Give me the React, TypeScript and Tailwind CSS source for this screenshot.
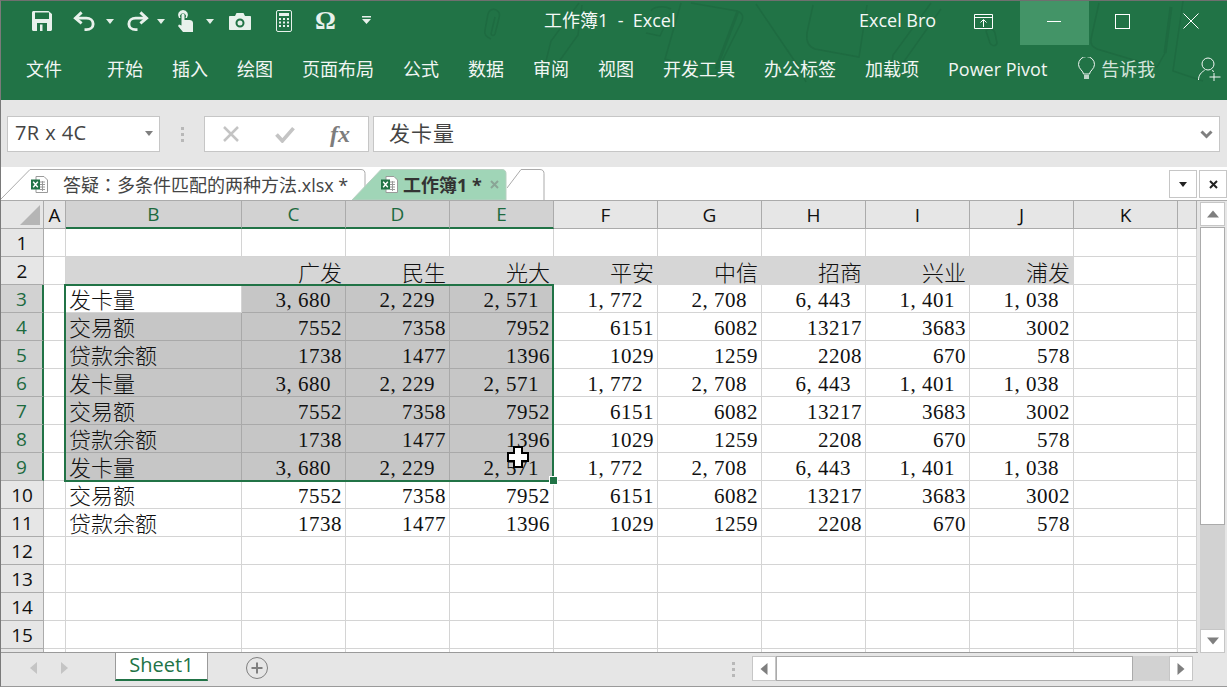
import React from "react";

const uiFont = "font-['Open_Sans','Noto_Sans_CJK_SC',sans-serif]";

const ribbonTabs = ["开始", "插入", "绘图", "页面布局", "公式", "数据", "审阅", "视图", "开发工具", "办公标签", "加载项", "Power Pivot"];
const columns = ["A", "B", "C", "D", "E", "F", "G", "H", "I", "J", "K", ""];
const heads = ["广发", "民生", "光大", "平安", "中信", "招商", "兴业", "浦发"];

const issued = ["3, 680", "2, 229", "2, 571", "1, 772", "2, 708", "6, 443", "1, 401", "1, 038"];
const amount = ["7552", "7358", "7952", "6151", "6082", "13217", "3683", "3002"];
const balance = ["1738", "1477", "1396", "1029", "1259", "2208", "670", "578"];

const blocks: Record<number, { label: string; values: string[] }> = {
  3: { label: "发卡量", values: issued },
  4: { label: "交易额", values: amount },
  5: { label: "贷款余额", values: balance },
  6: { label: "发卡量", values: issued },
  7: { label: "交易额", values: amount },
  8: { label: "贷款余额", values: balance },
  9: { label: "发卡量", values: issued },
  10: { label: "交易额", values: amount },
  11: { label: "贷款余额", values: balance },
};

const Caret = ({ className = "" }: { className?: string }) => (
  <svg width="8" height="5" viewBox="0 0 8 5" className={className}>
    <path d="M0 0h8L4 5z" fill="#e4efe8" />
  </svg>
);

function Qat() {
  return (
    <div className="flex items-center w-[380px] h-full pb-[4px]">
      {/* save */}
      <svg width="20" height="20" viewBox="0 0 20 20" className="ml-[31px]">
        <path fillRule="evenodd" d="M0 1.5C0 .7.7 0 1.5 0h15L20 3v15.5c0 .8-.7 1.5-1.5 1.5h-17C.7 20 0 19.300 0 18.500zM3 1.500v6.500h14V1.500zM5 12v8h10v-8zM8 13.500h2.500V20H8z" fill="#e8f1ec" />
      </svg>
      {/* undo */}
      <svg width="23" height="22" viewBox="0 0 24 22" className="ml-[21px]" fill="none" stroke="#e8f1ec" strokeWidth="3">
        <path d="M9 2 2.500 8 9 13.500" />
        <path d="M3 8h11c4 0 7 2.500 7 6s-3 6-7 6h-2" />
      </svg>
      <Caret className="ml-[10px]" />
      {/* redo */}
      <svg width="23" height="22" viewBox="0 0 24 22" className="ml-[12px]" fill="none" stroke="#e8f1ec" strokeWidth="3">
        <path d="M15 2l6.500 6L15 13.500" />
        <path d="M21 8H10c-4 0-7 2.500-7 6s3 6 7 6h2" />
      </svg>
      <Caret className="ml-[8px]" />
      {/* touch */}
      <svg width="16" height="22" viewBox="0 0 16 22" className="ml-[12px]">
        <path fillRule="evenodd" d="M6 0a5 5 0 0 1 4 8H8.500a3 3 0 1 0-5 0H2A5 5 0 0 1 6 0z" fill="#e8f1ec" />
        <path d="M4.500 5a1.500 1.500 0 0 1 3 0v5h5c2 0 3.500 1 3.500 3v9H6l-5-6 1-1.500 2.500 1z" fill="#e8f1ec" />
      </svg>
      <Caret className="ml-[13px]" />
      {/* camera */}
      <svg width="22" height="17" viewBox="0 0 22 17" className="ml-[15px]">
        <path fillRule="evenodd" d="M1 3h5l1.500-3h7L16 3h5c.6 0 1 .4 1 1v12c0 .6-.4 1-1 1H1c-.6 0-1-.4-1-1V4c0-.6.4-1 1-1zm10 2.500a4.500 4.500 0 1 0 0 9 4.500 4.500 0 0 0 0-9zm0 2a2.500 2.500 0 1 1 0 5 2.500 2.500 0 0 1 0-5z" fill="#e8f1ec" />
      </svg>
      {/* calculator */}
      <svg width="16" height="22" viewBox="0 0 16 22" className="ml-[25px]">
        <rect x=".5" y=".5" width="15" height="21" rx="1.500" fill="none" stroke="#e8f1ec" />
        <rect x="3" y="3" width="10" height="3" fill="#e8f1ec" />
        <path d="M3 8h2v2H3zM7 8h2v2H7zM11 8h2v2h-2zM3 11.500h2v2H3zM7 11.500h2v2H7zM11 11.500h2v2h-2zM3 15h2v2H3zM7 15h2v2H7zM11 15h2v2h-2z" fill="#e8f1ec" />
      </svg>
      <span className="ml-[23px] w-[21px] text-[26px] leading-none font-bold text-[#e8f1ec] font-['Liberation_Serif',serif]">Ω</span>
      <svg width="9" height="8" viewBox="0 0 9 8" className="ml-[26px] mb-[3px]">
        <path d="M0 0h9v1.500H0zM0 3h9L4.500 8z" fill="#e8f1ec" />
      </svg>
    </div>
  );
}

function WindowButtons() {
  return (
    <div className="flex h-full pb-[4px]">
      <div className="w-[69px] flex items-center justify-center">
        <svg width="14" height="1" viewBox="0 0 14 1"><path d="M0 .5h14" stroke="#fff" /></svg>
      </div>
      <div className="w-[69px] flex items-center justify-center">
        <svg width="15" height="15" viewBox="0 0 15 15"><rect x=".5" y=".5" width="14" height="14" fill="none" stroke="#fff" /></svg>
      </div>
      <div className="w-[68px] flex items-center justify-center">
        <svg width="16" height="16" viewBox="0 0 16 16"><path d="M.5.5l15 15M15.500.5l-15 15" stroke="#fff" /></svg>
      </div>
    </div>
  );
}

function Doodles() {
  return (
    <svg width="1226" height="99" viewBox="0 0 1226 99" className="absolute left-0 top-0" fill="none" stroke="#1e6b41" strokeWidth="1.500">
      <path d="M490 38c-5-2-7-5-6-9l3-16c1-4 5-6 8-4 4 2 4 5 3 8l-4 16c-1 2-3 2-4 0l4-17" />
      <path d="M578 2l-28 38-9 36 6 0 30-42 4-30" />
      <path d="M680 2l-16 56 50 16 26-52c3-6 2-10-4-12L690 2" />
      <path d="M715 68l22-58" strokeWidth="3" />
      <path d="M650 10c2-4 12-6 20-2M645 32l14 3 10-22" />
      <path d="M755 3l42 62 8 16" />
      <path d="M812 4l-6 28c-1 8 2 14 8 16l44 8 8-52" />
      <path d="M930 2l-38 52-2 14 12-6 38-54" />
      <path d="M985 30c3-4 8-2 9 2l2 10c-1 4-6 3-7 0z" />
      <path d="M1098 2l-8 36c-1 6 2 8 6 10l60 18 8-14" />
      <path d="M1170 6l-6 46" strokeWidth="3" />
      <path d="M1182 0l-10 70 30 10" />
    </svg>
  );
}

function ExcelFile() {
  return (
    <svg width="17" height="17" viewBox="0 0 17 17">
      <path d="M5 .5h8l3.500 3.500v12.500H5z" fill="#fff" stroke="#9a9a9a" />
      <path d="M9 6h5M9 8.500h5M9 11h5M9 13.500h5M11.500 5v10" stroke="#9a9a9a" />
      <rect x="0" y="3.500" width="9" height="10" fill="#217346" />
      <path d="M2.200 5.800l4.600 5.500M6.800 5.800l-4.600 5.500" stroke="#fff" strokeWidth="1.400" />
    </svg>
  );
}

function FileTabs() {
  return (
    <div className="flex h-[34px] bg-white border-b border-[#ababab] relative pt-[2px]">
      <div className="relative w-[365px] h-[31px] shrink-0">
        <svg width="365" height="31" viewBox="0 0 365 31" className="absolute left-0 top-0">
          <path d="M0 30 29 .5h331c3 0 4 2 4 4V31" fill="#fff" stroke="#ababab" />
        </svg>
        <div className="relative flex items-center h-full pl-[30px]">
          <ExcelFile />
          <span className="ml-[15px] text-[18px] leading-none text-[#444444] whitespace-nowrap">
            答疑<span className="font-['Noto_Sans_CJK_TC',sans-serif]">：</span>多条件匹配的两种方法.xlsx *
          </span>
        </div>
      </div>
      <div className="relative w-[155px] h-[31px] shrink-0 -ml-[14px]">
        <svg width="155" height="31" viewBox="0 0 155 31" className="absolute left-0 top-0">
          <path d="M0 31 29 .5h121c3 0 4 2 4 4V31z" fill="#a0d5b7" stroke="#b7cfc0" />
        </svg>
        <div className="relative flex items-center h-full pl-[29px]">
          <ExcelFile />
          <span className="ml-[5px] text-[18px] leading-none font-bold text-[#333333] whitespace-nowrap">工作簿1 *</span>
          <svg width="9" height="9" viewBox="0 0 9 9" className="ml-[8px]">
            <path d="M1 1l7 7M8 1 1 8" stroke="#8aa596" strokeWidth="2" />
          </svg>
        </div>
      </div>
      <div className="relative w-[38px] h-[31px] shrink-0">
        <svg width="38" height="31" viewBox="0 0 38 31" className="absolute left-0 top-0">
          <path d="M0 19 14 .5h19c3 0 4 2 4 4V31" fill="#fff" stroke="#ababab" />
        </svg>
      </div>
      <div className="ml-auto flex gap-[2px] mt-[1px]">
        <div className="w-[28px] h-[28px] border border-[#c6c6c6] flex items-center justify-center">
          <svg width="8" height="5" viewBox="0 0 8 5"><path d="M0 0h8L4 5z" fill="#222" /></svg>
        </div>
        <div className="w-[28px] h-[28px] border border-[#c6c6c6] flex items-center justify-center">
          <svg width="9" height="9" viewBox="0 0 9 9"><path d="M1 1l7 7M8 1 1 8" stroke="#222" strokeWidth="2" /></svg>
        </div>
      </div>
    </div>
  );
}

function Cell({ row, col }: { row: number; col: number }) {
  // col: 0 = A, 1 = B, 2.. = C..J, 10 = K, 11 = remainder
  const inSelection = row >= 3 && row <= 9 && col >= 1 && col <= 4;
  const active = row === 3 && col === 1;
  const block = blocks[row];
  let text = "";
  if (row === 2 && col >= 2 && col <= 9) text = heads[col - 2];
  if (block && col === 1) text = block.label;
  if (block && col >= 2 && col <= 9) text = block.values[col - 2];
  const spaced = text.includes(",");

  if (row === 2 && col >= 1 && col <= 9) {
    return (
      <div className="bg-[#d6d6d6] flex items-center justify-end pr-[4px] text-[22px] leading-none font-light text-[#111111] font-['Noto_Sans_CJK_SC',sans-serif]">
        {text}
      </div>
    );
  }
  if (col === 1 && text) {
    return (
      <div className={`${inSelection && !active ? "bg-[#c6c6c6] border-[#a9a9a9]" : "bg-white border-[#d4d4d4]"} border-r border-b flex items-center pl-[3px] pb-[2px] text-[22px] leading-none font-light text-[#111111] font-['Noto_Sans_CJK_SC',sans-serif]`}>
        {text}
      </div>
    );
  }
  return (
    <div className={`${inSelection ? "bg-[#c6c6c6] border-[#a9a9a9]" : "bg-white border-[#d4d4d4]"} border-r border-b flex items-center justify-end pt-[3px] ${spaced ? "pr-[14px]" : "pr-[3px]"} text-[21px] tracking-[0.5px] leading-none text-[#111111] font-['Liberation_Serif',serif] whitespace-nowrap`}>
      {text}
    </div>
  );
}

function Sheet() {
  const rows = Array.from({ length: 16 }, (_, i) => i + 1);
  return (
    <div className="relative w-[1197px] h-[452px] overflow-hidden border-b border-[#9a9a9a] shrink-0">
      <div className="grid grid-cols-[43px_22px_176px_repeat(9,104px)_19px] auto-rows-[28px]">
        {/* corner */}
        <div className="bg-[#e6e6e6] border-r border-b border-[#ababab] flex items-end justify-end pr-[3px] pb-[3px]">
          <svg width="20" height="20" viewBox="0 0 20 20"><path d="M20 0v20H0z" fill="#b5b5b5" /></svg>
        </div>
        {columns.map((c, i) => {
          const sel = i >= 1 && i <= 4;
          return (
            <div
              key={i}
              className={`${sel ? "bg-[#d2d2d2] text-[#1d6a3f] border-b-2 border-b-[#217346] border-r-[#ababab]" : "bg-[#e6e6e6] text-[#111111] border-b border-b-[#ababab] border-r-[#ababab]"} border-r flex items-center justify-center pt-[1px] text-[19px] leading-none`}
            >
              {c}
            </div>
          );
        })}
        {rows.map((r) => {
          const sel = r >= 3 && r <= 9;
          return (
            <React.Fragment key={r}>
              <div className={`${sel ? "bg-[#d2d2d2] text-[#1d6a3f] border-r-2 border-r-[#217346] border-b-[#ababab]" : "bg-[#e6e6e6] text-[#111111] border-r border-r-[#ababab] border-b-[#ababab]"} border-b flex items-center justify-center pt-[2px] text-[19px] leading-none`}>
                {r < 16 ? r : ""}
              </div>
              {columns.map((_, c) => (
                <Cell key={c} row={r} col={c} />
              ))}
            </React.Fragment>
          );
        })}
      </div>
      {/* selection outline */}
      <div className="absolute left-[63px] top-[83px] w-[490px] h-[198px] border-2 border-[#217346]" />
      <div className="absolute left-[549px] top-[276px] w-[7px] h-[7px] bg-[#217346] outline outline-1 outline-white" />
      {/* move cursor */}
      <svg width="22" height="22" viewBox="0 0 22 22" className="absolute left-[506px] top-[245px]">
        <path d="M7 1h8v6h6v8h-6v6H7v-6H1V7h6z" fill="#fff" stroke="#000" strokeWidth="2" />
      </svg>
    </div>
  );
}

function ScrollButton({ dir }: { dir: "up" | "down" | "left" | "right" }) {
  const d = { up: "M0 7 6 0l6 7z", down: "M0 0h12L6 7z", left: "M7 0v12L0 6z", right: "M0 0v12l7-6z" }[dir];
  const box = dir === "up" || dir === "down" ? "w-[25px] h-[24px]" : "w-[24px] h-[25px]";
  return (
    <div className={`${box} bg-white border border-[#c6c6c6] flex items-center justify-center shrink-0`}>
      <svg width="12" height="12" viewBox="0 0 12 12" className="block"><path d={d} fill="#7f7f7f" transform={dir === "up" || dir === "down" ? "translate(0 2.500)" : "translate(2.500 0)"} /></svg>
    </div>
  );
}

export default function App() {
  return (
    <div className={`w-[1227px] h-[687px] overflow-hidden bg-[#e6e6e6] border-l border-t border-b border-l-[#7a7a7a] border-t-[#6f6f6f] border-b-[#9a9a9a] flex flex-col ${uiFont}`}>
      {/* title + ribbon tabs */}
      <div className="relative h-[99px] bg-[#217346] shrink-0 flex flex-col text-white">
        <Doodles />
        <div className="relative flex h-[44px]">
          <Qat />
          <div className="ml-[163px] w-[315px] flex items-center pb-[6px] text-[18px] leading-none whitespace-pre text-[#f4f8f6]">工作簿1  -  Excel</div>
          <div className="w-[115px] flex items-center pb-[6px] text-[18px] leading-none text-[#f4f8f6]">Excel Bro</div>
          <div className="w-[45px] flex items-center pb-[4px]">
            <svg width="19" height="15" viewBox="0 0 19 15">
              <path d="M.5.5h18v14H.5zM.5 3.500h18M9.500 13V6M6.500 8.500l3-3 3 3" fill="none" stroke="#fff" />
            </svg>
          </div>
          <div className="absolute left-[1019px] top-0 w-[69px] h-[44px] bg-[#439467]" />
          <div className="absolute left-[1018px] top-0 h-[44px]">
            <WindowButtons />
          </div>
        </div>
        <div className="relative flex items-center h-[51px] pb-[4px] text-[18px] leading-none text-[#f1f6f3] whitespace-nowrap">
          <span className="ml-[25px]">文件</span>
          <div className="ml-[45px] flex gap-[29px]">
            {ribbonTabs.map((t) => (
              <span key={t}>{t}</span>
            ))}
          </div>
          <svg width="17" height="23" viewBox="0 0 17 23" className="ml-[31px]" fill="none" stroke="#f1f6f3">
            <path d="M5.500 17c0-3-5-5-5-9.500a8 8 0 0 1 16 0c0 4.500-5 6.500-5 9.500z" />
            <path d="M6 19h5M6 21h5" strokeWidth="1.500" />
          </svg>
          <span className="ml-[6px] text-[#d5e4db]">告诉我</span>
          <svg width="23" height="24" viewBox="0 0 23 24" className="ml-[43px]" fill="none" stroke="#f1f6f3">
            <circle cx="10" cy="7" r="6" />
            <path d="M.5 23c0-5 3-8 6-9.500M14 13.500l2 1M16 16v8M11.500 20h11" />
          </svg>
        </div>
      </div>

      {/* formula bar */}
      <div className="h-[67px] shrink-0 flex items-start pt-[16px] pl-[6px]">
        <div className="w-[153px] h-[36px] bg-white border border-[#c6c6c6] flex items-center justify-between pl-[7px] pr-[6px] pb-[2px] text-[#444444] text-[20px] tracking-[0.4px] leading-none">
          <span>7R x 4C</span>
          <svg width="8" height="5" viewBox="0 0 8 5"><path d="M0 0h8L4 5z" fill="#7f7f7f" /></svg>
        </div>
        <div className="w-[44px] h-[36px] flex flex-col items-center justify-center gap-[3px]">
          <span className="w-[3px] h-[3px] bg-[#b8b8b8]" />
          <span className="w-[3px] h-[3px] bg-[#b8b8b8]" />
          <span className="w-[3px] h-[3px] bg-[#b8b8b8]" />
        </div>
        <div className="w-[165px] h-[36px] bg-white border border-[#c6c6c6] flex items-center pl-[17px]">
          <svg width="18" height="18" viewBox="0 0 18 18"><path d="M2 2l14 14M16 2 2 16" stroke="#c4c4c4" strokeWidth="2.500" /></svg>
          <svg width="22" height="17" viewBox="0 0 20 16" className="ml-[34px]"><path d="M2 8l5.500 6L18 2" fill="none" stroke="#c4c4c4" strokeWidth="3.500" /></svg>
          <span className="ml-[34px] text-[24px] leading-none italic font-bold text-[#7d7d7d] font-['Liberation_Serif',serif]">fx</span>
        </div>
        <div className="ml-[4px] w-[847px] h-[36px] bg-white border border-[#c6c6c6] flex items-center justify-between pl-[15px] pr-[6px]">
          <span className="pb-[2px] text-[21px] tracking-[1px] leading-none text-[#444444]">发卡量</span>
          <svg width="13" height="9" viewBox="0 0 13 9"><path d="M1.500 1.500l5 5 5-5" fill="none" stroke="#7f7f7f" strokeWidth="3" /></svg>
        </div>
      </div>

      <FileTabs />

      {/* sheet and vertical scrollbar */}
      <div className="flex h-[452px] shrink-0">
        <Sheet />
        <div className="flex-1 flex flex-col items-center pt-[1px]">
          <ScrollButton dir="up" />
          <div className="w-[25px] h-[298px] bg-white border border-[#ababab] mt-[1px] shrink-0" />
          <div className="w-[25px] h-[104px] bg-[#d2d2d2] shrink-0" />
          <ScrollButton dir="down" />
        </div>
      </div>

      {/* sheet tabs and horizontal scrollbar */}
      <div className="flex items-start flex-1 min-h-0 text-[#555555]">
        <div className="w-[114px] h-[29px] flex items-center pl-[29px] gap-[24px]">
          <svg width="7" height="12" viewBox="0 0 7 12"><path d="M7 0v12L0 6z" fill="#c4c4c4" /></svg>
          <svg width="7" height="12" viewBox="0 0 7 12"><path d="M0 0v12l7-6z" fill="#c4c4c4" /></svg>
        </div>
        <div className="w-[93px] h-[29px] -mt-[1px] pb-[2px] bg-white border-x border-[#9a9a9a] border-b-2 border-b-[#217346] flex items-center justify-center text-[20px] leading-none text-[#217346]">
          Sheet1
        </div>
        <svg width="22" height="22" viewBox="0 0 22 22" className="ml-[38px] mt-[4px]" fill="none" stroke="#7f7f7f">
          <circle cx="11" cy="11" r="10.500" />
          <path d="M11 5.500v11M5.500 11h11" strokeWidth="2" />
        </svg>
        <div className="ml-[464px] w-[3px] mt-[9px] flex flex-col gap-[3px]">
          <span className="h-[3px] bg-[#b8b8b8]" />
          <span className="h-[3px] bg-[#b8b8b8]" />
          <span className="h-[3px] bg-[#b8b8b8]" />
        </div>
        <div className="ml-[17px] mt-[3px] flex">
          <ScrollButton dir="left" />
          <div className="w-[357px] h-[25px] bg-white border border-[#ababab] shrink-0" />
          <div className="w-[36px] h-[25px] bg-[#d2d2d2] shrink-0" />
          <ScrollButton dir="right" />
        </div>
      </div>
    </div>
  );
}
